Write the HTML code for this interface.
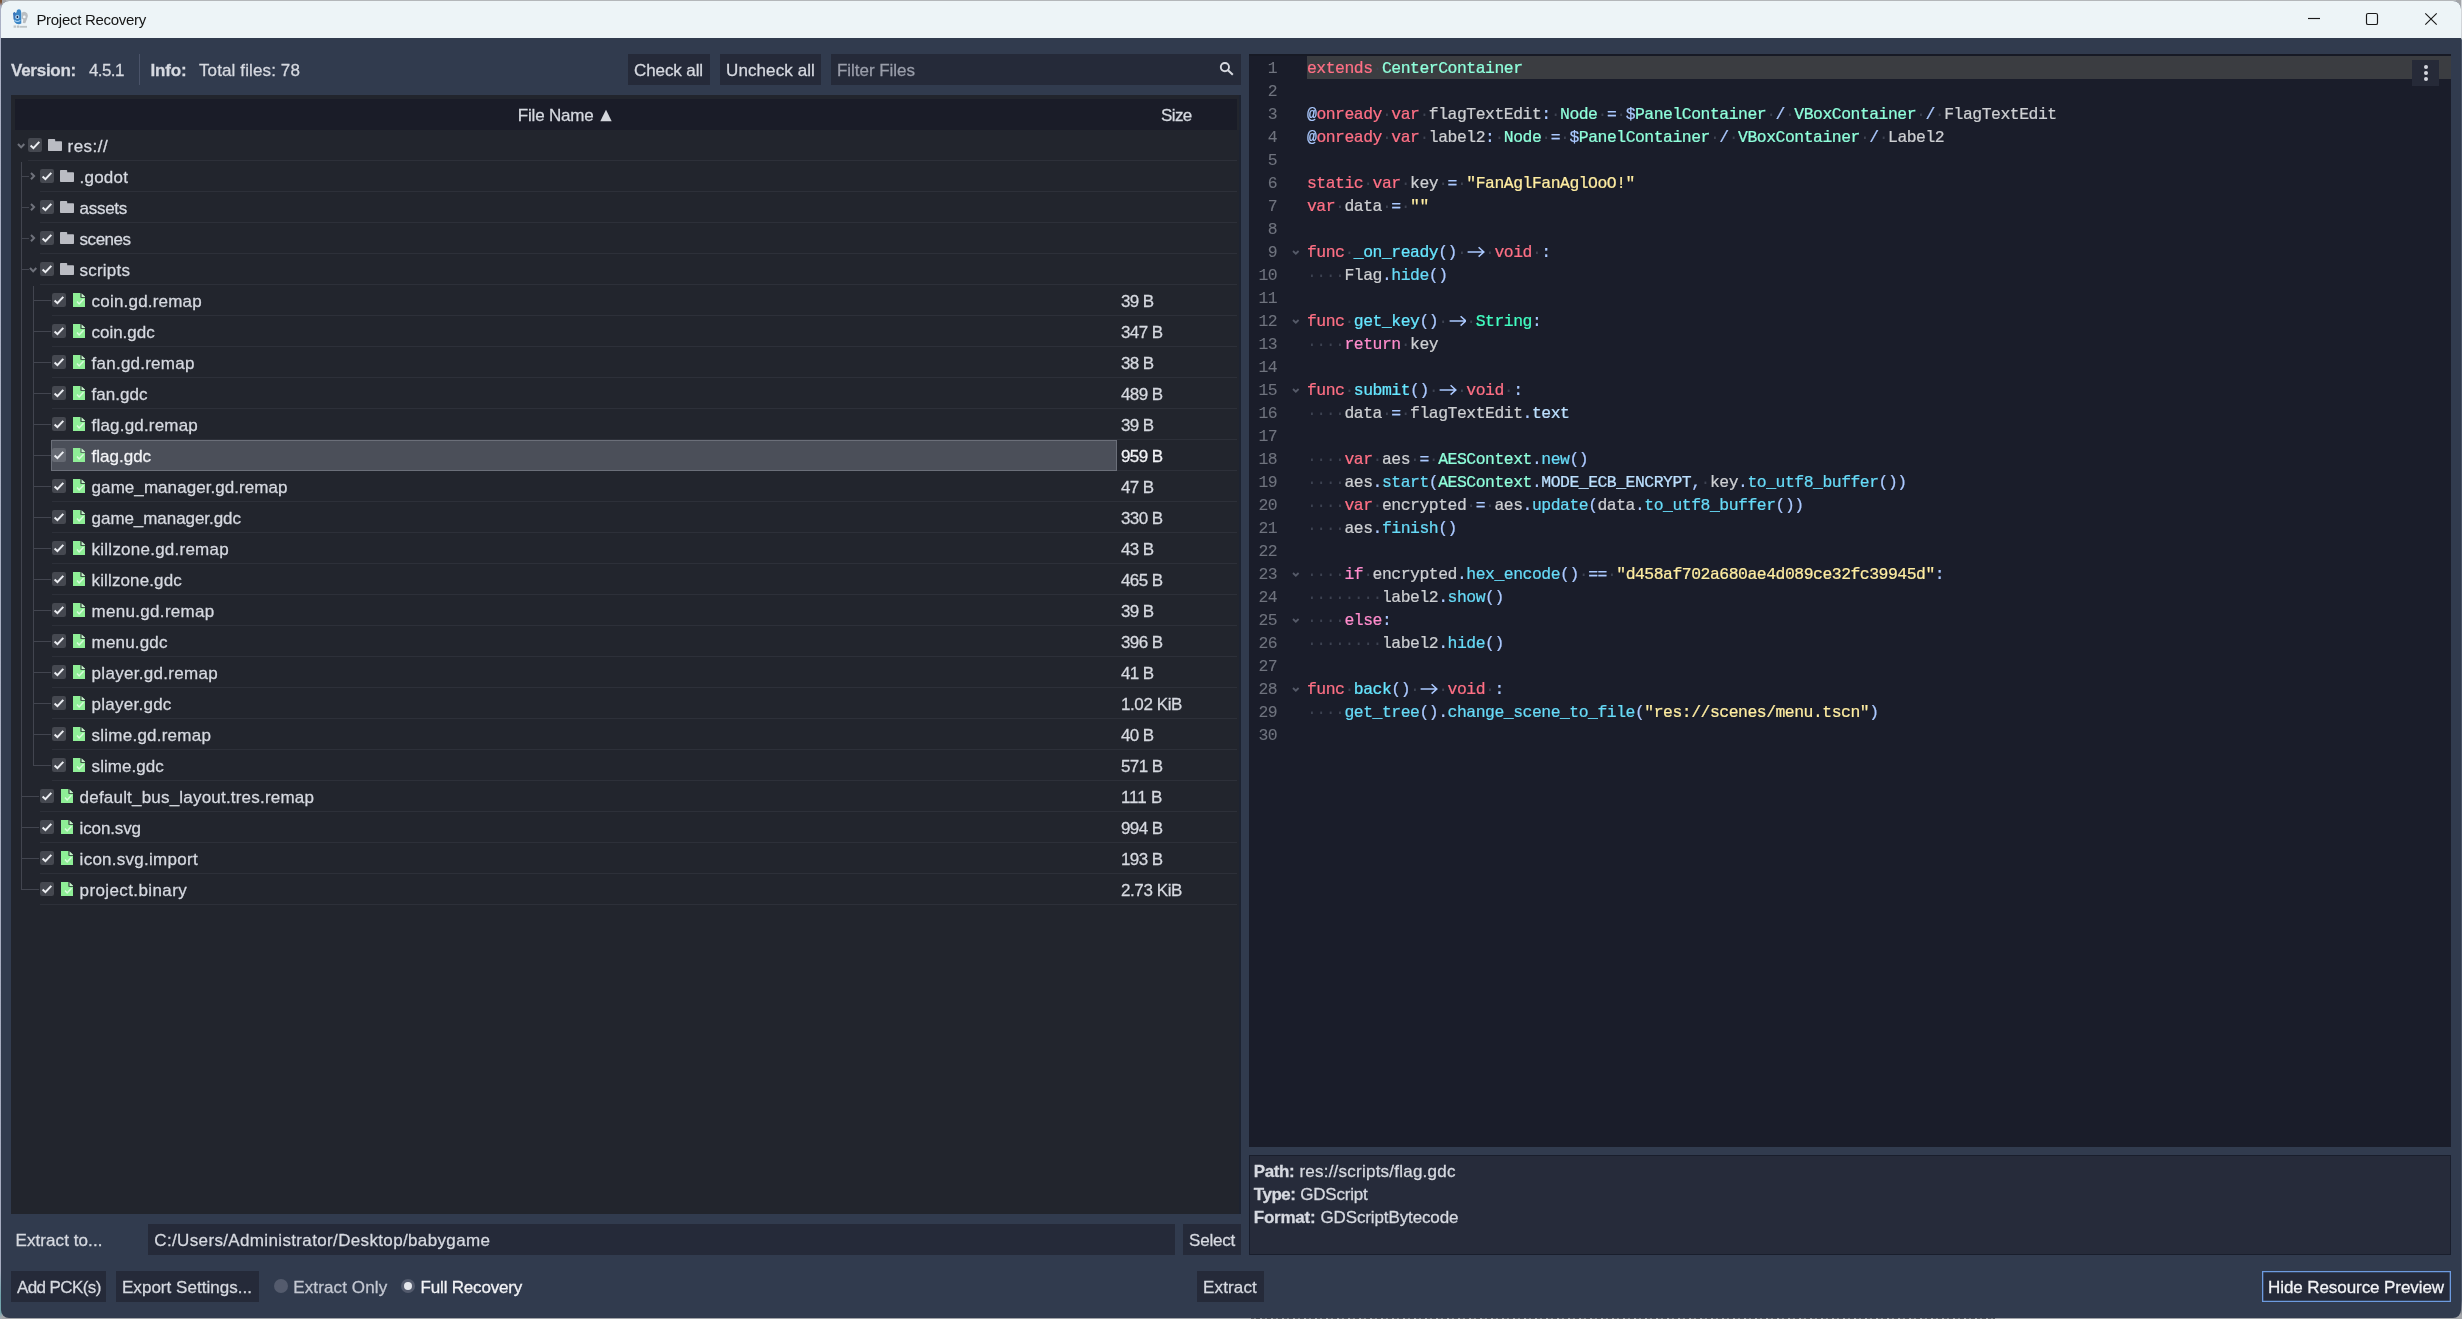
<!DOCTYPE html>
<html><head><meta charset="utf-8"><title>Project Recovery</title><style>
html,body{margin:0;padding:0}
body{width:2462px;height:1319px;position:relative;overflow:hidden;background:#9b9da1;font-family:"Liberation Sans",sans-serif;font-size:17px;}
#root{position:absolute;left:0;top:0;width:2462px;height:1319px;will-change:transform}
.b{position:absolute;display:block}
.t{position:absolute;white-space:pre;line-height:31px;height:31px;letter-spacing:0.0px;color:#d6d9e0;-webkit-text-stroke:0.28px}
.c{position:absolute;white-space:pre;font-family:"Liberation Mono",monospace;font-size:16.4px;letter-spacing:-0.4666px;line-height:23px;height:23px;color:#cdcfd2;-webkit-text-stroke:0.24px}
.ln{text-align:right;color:#6f737e;-webkit-text-stroke:0.1px}
.sp{color:#3d4251;-webkit-text-stroke:0}
.ar{display:inline-block;width:18.75px;height:23px;vertical-align:top;letter-spacing:0}
.ar svg{display:block}
</style></head>
<body>
<div id="root">
<div class="b" style="left:0;top:0;width:2462px;height:1319px;background:#a3a5a9"></div>
<div class="b" style="left:0;top:0;width:2px;height:1319px;background:linear-gradient(180deg,#7a5236 0,#7a5236 2px,#aab0c4 6px,#a6acc0 1270px,#6ea2ab 1296px,#76a6ae 1312px,#a5aab0 1318px)"></div>
<div class="b" style="left:2461px;top:0;width:1px;height:1319px;background:linear-gradient(180deg,#d5d8db 0,#cfd3d8 38px,#4a5468 40px,#4a5468 1300px,#a3a5a9 1316px)"></div>
<div class="b" style="left:1251px;top:1318px;width:744px;height:1px;background:repeating-linear-gradient(90deg,#5d6066 0,#5d6066 3px,#8d9095 3px,#8d9095 5px,#55585e 5px,#55585e 9px,#a3a5a9 9px,#a3a5a9 11px)"></div>
<div class="b" style="left:1px;top:1px;width:2460px;height:1316.5px;border-radius:8px;background:#313b4e;overflow:hidden"><div class="b" style="left:0;top:0;width:2460px;height:37px;background:#edf4f7"></div></div>
<div class="b" style="left:6px;top:0;width:2450px;height:1px;background:#b4b7ba"></div>
<svg class="b" style="left:10px;top:6px" width="22" height="26" viewBox="10 6 22 26">
<path d="M21.6 12.9 Q24.6 10.6 27.3 13.4 Q28.9 16.4 27 19 L25.3 23.3 L22.8 22.9 L23.3 19.6 L21.6 18.8 Z" fill="#b9bec2"/>
<circle cx="24.3" cy="16.9" r="1.35" fill="#f1f6f8"/>
<path d="M13.1 13.4 L14.2 12.1 L15.5 13 L16.6 12.3 L16.9 10.2 Q18.7 8.7 20.5 9.7 L21.2 12 L21.3 23.5 Q19 24.7 16.4 23.7 Q14 22.5 13.7 19.2 L13.5 15.4 Z" fill="#3a85c5"/>
<path d="M13.1 13.4 L14.2 12.1 L15.5 13 L15.2 19 L13.7 19.2 L13.5 15.4 Z" fill="#3c74b8"/>
<circle cx="17.3" cy="17" r="2.1" fill="#b9dcf6"/><ellipse cx="17.4" cy="16.9" rx="0.85" ry="1.2" fill="#1b2a55"/>
<path d="M14.5 20.2 Q17.3 22.8 20.3 20.4" fill="none" stroke="#a9d2f3" stroke-width="1.1"/>
<rect x="13.6" y="25.5" width="2.6" height="2.2" fill="#8b9196" opacity=".5"/><rect x="17" y="25.5" width="2.2" height="2.2" fill="#8b9196" opacity=".55"/><rect x="19.6" y="25.9" width="7.4" height="1.8" fill="#8b9196" opacity=".5"/>
</svg>
<div id="t1" class="t " style="left:36.4px;top:4px;color:#151515;font-size:15px;-webkit-text-stroke:0;letter-spacing:-0.295px;">Project Recovery</div>
<svg class="b" style="left:2300px;top:8px" width="150" height="22" viewBox="0 0 150 22" fill="none" stroke="#1a1a1a" stroke-width="1.15"><path d="M8 10.5 H20"/><rect x="66.5" y="5.5" width="11" height="11" rx="1.6"/><path d="M125.3 5.3 L136.7 16.7 M136.7 5.3 L125.3 16.7"/></svg>
<div id="t2" class="t " style="left:11px;top:55px;color:#d6d9e0;font-weight:bold;letter-spacing:-0.262px;">Version:</div>
<div id="t3" class="t " style="left:89px;top:55px;color:#d6d9e0;letter-spacing:-0.600px;">4.5.1</div>
<div class="b" style="left:139px;top:54px;width:1px;height:31px;background:#4a5369;"></div>
<div id="t4" class="t " style="left:150.5px;top:55px;color:#d6d9e0;font-weight:bold;letter-spacing:-0.166px;">Info:</div>
<div id="t5" class="t " style="left:199px;top:55px;color:#d6d9e0;letter-spacing:0.118px;">Total files: 78</div>
<div class="b" style="left:628px;top:54px;width:82px;height:31px;background:#252a39;"></div>
<div id="t6" class="t " style="left:634px;top:55px;color:#d6d9e0;letter-spacing:-0.102px;">Check all</div>
<div class="b" style="left:720px;top:54px;width:101px;height:31px;background:#252a39;"></div>
<div id="t7" class="t " style="left:726px;top:55px;color:#d6d9e0;letter-spacing:0.102px;">Uncheck all</div>
<div class="b" style="left:831px;top:54px;width:410px;height:31px;background:#252a39;"></div>
<div id="t8" class="t " style="left:837px;top:55px;color:#9a9eaa;letter-spacing:-0.034px;">Filter Files</div>
<svg class="b" style="left:1216px;top:59px" width="20" height="20" viewBox="0 0 20 20"><circle cx="8.9" cy="8.1" r="4.1" fill="none" stroke="#d6d8df" stroke-width="1.9"/><path d="M12 11.2 L16.8 15.8" stroke="#d6d8df" stroke-width="2"/></svg>
<div class="b" style="left:11px;top:95px;width:1230px;height:1119px;background:#22252d;"></div>
<div class="b" style="left:1239px;top:95px;width:2px;height:1119px;background:#1d2331;"></div>
<div class="b" style="left:15px;top:99px;width:1222px;height:30.5px;background:#1a1c28;"></div>
<div id="t9" class="t " style="left:517.8px;top:100px;color:#d6d9e0;letter-spacing:-0.185px;">File Name</div>
<svg class="b" style="left:600px;top:109px" width="12" height="13"><path d="M0.3 12.3 L6 0.8 L11.7 12.3 Z" fill="#d5d7dd"/></svg>
<div id="t10" class="t " style="left:1161px;top:100px;color:#d6d9e0;letter-spacing:-0.600px;">Size</div>
<div class="b" style="left:21px;top:161.5px;width:1px;height:728.5px;background:#42454f;"></div>
<div class="b" style="left:33px;top:285.5px;width:1px;height:480.5px;background:#42454f;"></div>
<div class="b" style="left:28px;top:160px;width:1209px;height:1px;background:#2d3039;"></div>
<svg class="b" style="left:15.80px;top:142.15px" width="10.3" height="7.4" viewBox="-2 -2 10.3 7.4"><path d="M0 0 L3.15 3.4 L6.3 0" fill="none" stroke="#6f727b" stroke-width="2.0"/></svg>
<svg class="b" style="left:28px;top:138.3px" width="14" height="14" viewBox="0 0 14 14"><rect width="14" height="14" rx="2.2" fill="#454850"/><path d="M2.6 7.6 L5.4 10.2 L11.3 3.9" fill="none" stroke="#eceef2" stroke-width="2"/></svg>
<svg class="b" style="left:48px;top:139.3px" width="14" height="12" viewBox="0 0 14 12"><path d="M0 0.8 Q0 0 0.8 0 H6.4 Q7.2 0 7.2 0.8 V2.2 H13.2 Q14 2.2 14 3 V11.2 Q14 12 13.2 12 H0.8 Q0 12 0 11.2 Z" fill="#babcc3"/></svg>
<div id="t11" class="t " style="left:67.6px;top:131px;color:#d6d9e0;letter-spacing:0.451px;">res://</div>
<div class="b" style="left:40px;top:191px;width:1197px;height:1px;background:#2d3039;"></div>
<div class="b" style="left:22px;top:176px;width:7px;height:1px;background:#42454f;"></div>
<svg class="b" style="left:28.95px;top:171.20px" width="7.1" height="10.2" viewBox="-2 -2 7.1 10.2"><path d="M0 0 L3.1 3.1 L0 6.2" fill="none" stroke="#6f727b" stroke-width="2.0"/></svg>
<svg class="b" style="left:40px;top:169.3px" width="14" height="14" viewBox="0 0 14 14"><rect width="14" height="14" rx="2.2" fill="#454850"/><path d="M2.6 7.6 L5.4 10.2 L11.3 3.9" fill="none" stroke="#eceef2" stroke-width="2"/></svg>
<svg class="b" style="left:60px;top:170.3px" width="14" height="12" viewBox="0 0 14 12"><path d="M0 0.8 Q0 0 0.8 0 H6.4 Q7.2 0 7.2 0.8 V2.2 H13.2 Q14 2.2 14 3 V11.2 Q14 12 13.2 12 H0.8 Q0 12 0 11.2 Z" fill="#babcc3"/></svg>
<div id="t12" class="t " style="left:79.6px;top:162px;color:#d6d9e0;letter-spacing:0.206px;">.godot</div>
<div class="b" style="left:40px;top:222px;width:1197px;height:1px;background:#2d3039;"></div>
<div class="b" style="left:22px;top:207px;width:7px;height:1px;background:#42454f;"></div>
<svg class="b" style="left:28.95px;top:202.20px" width="7.1" height="10.2" viewBox="-2 -2 7.1 10.2"><path d="M0 0 L3.1 3.1 L0 6.2" fill="none" stroke="#6f727b" stroke-width="2.0"/></svg>
<svg class="b" style="left:40px;top:200.3px" width="14" height="14" viewBox="0 0 14 14"><rect width="14" height="14" rx="2.2" fill="#454850"/><path d="M2.6 7.6 L5.4 10.2 L11.3 3.9" fill="none" stroke="#eceef2" stroke-width="2"/></svg>
<svg class="b" style="left:60px;top:201.3px" width="14" height="12" viewBox="0 0 14 12"><path d="M0 0.8 Q0 0 0.8 0 H6.4 Q7.2 0 7.2 0.8 V2.2 H13.2 Q14 2.2 14 3 V11.2 Q14 12 13.2 12 H0.8 Q0 12 0 11.2 Z" fill="#babcc3"/></svg>
<div id="t13" class="t " style="left:79.6px;top:193px;color:#d6d9e0;letter-spacing:-0.307px;">assets</div>
<div class="b" style="left:40px;top:253px;width:1197px;height:1px;background:#2d3039;"></div>
<div class="b" style="left:22px;top:238px;width:7px;height:1px;background:#42454f;"></div>
<svg class="b" style="left:28.95px;top:233.20px" width="7.1" height="10.2" viewBox="-2 -2 7.1 10.2"><path d="M0 0 L3.1 3.1 L0 6.2" fill="none" stroke="#6f727b" stroke-width="2.0"/></svg>
<svg class="b" style="left:40px;top:231.3px" width="14" height="14" viewBox="0 0 14 14"><rect width="14" height="14" rx="2.2" fill="#454850"/><path d="M2.6 7.6 L5.4 10.2 L11.3 3.9" fill="none" stroke="#eceef2" stroke-width="2"/></svg>
<svg class="b" style="left:60px;top:232.3px" width="14" height="12" viewBox="0 0 14 12"><path d="M0 0.8 Q0 0 0.8 0 H6.4 Q7.2 0 7.2 0.8 V2.2 H13.2 Q14 2.2 14 3 V11.2 Q14 12 13.2 12 H0.8 Q0 12 0 11.2 Z" fill="#babcc3"/></svg>
<div id="t14" class="t " style="left:79.6px;top:224px;color:#d6d9e0;letter-spacing:-0.479px;">scenes</div>
<div class="b" style="left:40px;top:284px;width:1197px;height:1px;background:#2d3039;"></div>
<div class="b" style="left:22px;top:269px;width:7px;height:1px;background:#42454f;"></div>
<svg class="b" style="left:27.80px;top:266.15px" width="10.3" height="7.4" viewBox="-2 -2 10.3 7.4"><path d="M0 0 L3.15 3.4 L6.3 0" fill="none" stroke="#6f727b" stroke-width="2.0"/></svg>
<svg class="b" style="left:40px;top:262.3px" width="14" height="14" viewBox="0 0 14 14"><rect width="14" height="14" rx="2.2" fill="#454850"/><path d="M2.6 7.6 L5.4 10.2 L11.3 3.9" fill="none" stroke="#eceef2" stroke-width="2"/></svg>
<svg class="b" style="left:60px;top:263.3px" width="14" height="12" viewBox="0 0 14 12"><path d="M0 0.8 Q0 0 0.8 0 H6.4 Q7.2 0 7.2 0.8 V2.2 H13.2 Q14 2.2 14 3 V11.2 Q14 12 13.2 12 H0.8 Q0 12 0 11.2 Z" fill="#babcc3"/></svg>
<div id="t15" class="t " style="left:79.6px;top:255px;color:#d6d9e0;letter-spacing:0.196px;">scripts</div>
<div class="b" style="left:52px;top:315px;width:1185px;height:1px;background:#2d3039;"></div>
<div class="b" style="left:34px;top:300px;width:17px;height:1px;background:#42454f;"></div>
<svg class="b" style="left:52px;top:293.3px" width="14" height="14" viewBox="0 0 14 14"><rect width="14" height="14" rx="2.2" fill="#454850"/><path d="M2.6 7.6 L5.4 10.2 L11.3 3.9" fill="none" stroke="#eceef2" stroke-width="2"/></svg>
<svg class="b" style="left:72.6px;top:292.8px" width="12.7" height="14.4" viewBox="0.3 0.3 12.4 14.4" preserveAspectRatio="none"><path d="M0.3 0.3 H7.6 V5 H12.6 V14.6 H0.3 Z" fill="#8eee96"/><path d="M8.6 0.5 L12.5 4.2 H8.6 Z" fill="#c6f4ca"/><path d="M4.2 8.8 L6.3 11.2 L10.6 6.6" fill="none" stroke="#d8fbdb" stroke-width="1.5"/></svg>
<div id="t16" class="t " style="left:91.6px;top:286px;color:#d6d9e0;letter-spacing:0.197px;">coin.gd.remap</div>
<div id="t17" class="t " style="left:1121px;top:286px;color:#d6d9e0;letter-spacing:-0.600px;">39 B</div>
<div class="b" style="left:52px;top:346px;width:1185px;height:1px;background:#2d3039;"></div>
<div class="b" style="left:34px;top:331px;width:17px;height:1px;background:#42454f;"></div>
<svg class="b" style="left:52px;top:324.3px" width="14" height="14" viewBox="0 0 14 14"><rect width="14" height="14" rx="2.2" fill="#454850"/><path d="M2.6 7.6 L5.4 10.2 L11.3 3.9" fill="none" stroke="#eceef2" stroke-width="2"/></svg>
<svg class="b" style="left:72.6px;top:323.8px" width="12.7" height="14.4" viewBox="0.3 0.3 12.4 14.4" preserveAspectRatio="none"><path d="M0.3 0.3 H7.6 V5 H12.6 V14.6 H0.3 Z" fill="#8eee96"/><path d="M8.6 0.5 L12.5 4.2 H8.6 Z" fill="#c6f4ca"/><path d="M4.2 8.8 L6.3 11.2 L10.6 6.6" fill="none" stroke="#d8fbdb" stroke-width="1.5"/></svg>
<div id="t18" class="t " style="left:91.6px;top:317px;color:#d6d9e0;letter-spacing:-0.041px;">coin.gdc</div>
<div id="t19" class="t " style="left:1121px;top:317px;color:#d6d9e0;letter-spacing:-0.600px;">347 B</div>
<div class="b" style="left:52px;top:377px;width:1185px;height:1px;background:#2d3039;"></div>
<div class="b" style="left:34px;top:362px;width:17px;height:1px;background:#42454f;"></div>
<svg class="b" style="left:52px;top:355.3px" width="14" height="14" viewBox="0 0 14 14"><rect width="14" height="14" rx="2.2" fill="#454850"/><path d="M2.6 7.6 L5.4 10.2 L11.3 3.9" fill="none" stroke="#eceef2" stroke-width="2"/></svg>
<svg class="b" style="left:72.6px;top:354.8px" width="12.7" height="14.4" viewBox="0.3 0.3 12.4 14.4" preserveAspectRatio="none"><path d="M0.3 0.3 H7.6 V5 H12.6 V14.6 H0.3 Z" fill="#8eee96"/><path d="M8.6 0.5 L12.5 4.2 H8.6 Z" fill="#c6f4ca"/><path d="M4.2 8.8 L6.3 11.2 L10.6 6.6" fill="none" stroke="#d8fbdb" stroke-width="1.5"/></svg>
<div id="t20" class="t " style="left:91.6px;top:348px;color:#d6d9e0;letter-spacing:0.234px;">fan.gd.remap</div>
<div id="t21" class="t " style="left:1121px;top:348px;color:#d6d9e0;letter-spacing:-0.600px;">38 B</div>
<div class="b" style="left:52px;top:408px;width:1185px;height:1px;background:#2d3039;"></div>
<div class="b" style="left:34px;top:393px;width:17px;height:1px;background:#42454f;"></div>
<svg class="b" style="left:52px;top:386.3px" width="14" height="14" viewBox="0 0 14 14"><rect width="14" height="14" rx="2.2" fill="#454850"/><path d="M2.6 7.6 L5.4 10.2 L11.3 3.9" fill="none" stroke="#eceef2" stroke-width="2"/></svg>
<svg class="b" style="left:72.6px;top:385.8px" width="12.7" height="14.4" viewBox="0.3 0.3 12.4 14.4" preserveAspectRatio="none"><path d="M0.3 0.3 H7.6 V5 H12.6 V14.6 H0.3 Z" fill="#8eee96"/><path d="M8.6 0.5 L12.5 4.2 H8.6 Z" fill="#c6f4ca"/><path d="M4.2 8.8 L6.3 11.2 L10.6 6.6" fill="none" stroke="#d8fbdb" stroke-width="1.5"/></svg>
<div id="t22" class="t " style="left:91.6px;top:379px;color:#d6d9e0;letter-spacing:0.033px;">fan.gdc</div>
<div id="t23" class="t " style="left:1121px;top:379px;color:#d6d9e0;letter-spacing:-0.600px;">489 B</div>
<div class="b" style="left:52px;top:439px;width:1185px;height:1px;background:#2d3039;"></div>
<div class="b" style="left:34px;top:424px;width:17px;height:1px;background:#42454f;"></div>
<svg class="b" style="left:52px;top:417.3px" width="14" height="14" viewBox="0 0 14 14"><rect width="14" height="14" rx="2.2" fill="#454850"/><path d="M2.6 7.6 L5.4 10.2 L11.3 3.9" fill="none" stroke="#eceef2" stroke-width="2"/></svg>
<svg class="b" style="left:72.6px;top:416.8px" width="12.7" height="14.4" viewBox="0.3 0.3 12.4 14.4" preserveAspectRatio="none"><path d="M0.3 0.3 H7.6 V5 H12.6 V14.6 H0.3 Z" fill="#8eee96"/><path d="M8.6 0.5 L12.5 4.2 H8.6 Z" fill="#c6f4ca"/><path d="M4.2 8.8 L6.3 11.2 L10.6 6.6" fill="none" stroke="#d8fbdb" stroke-width="1.5"/></svg>
<div id="t24" class="t " style="left:91.6px;top:410px;color:#d6d9e0;letter-spacing:0.181px;">flag.gd.remap</div>
<div id="t25" class="t " style="left:1121px;top:410px;color:#d6d9e0;letter-spacing:-0.600px;">39 B</div>
<div class="b" style="left:52px;top:470px;width:1185px;height:1px;background:#2d3039;"></div>
<div class="b" style="left:51px;top:440px;width:1066px;height:31px;background:#4b4f59;box-shadow:0 0 0 1px #6b6f79 inset"></div>
<div class="b" style="left:34px;top:455px;width:17px;height:1px;background:#42454f;"></div>
<svg class="b" style="left:52px;top:448.3px" width="14" height="14" viewBox="0 0 14 14"><rect width="14" height="14" rx="2.2" fill="#666a73"/><path d="M2.6 7.6 L5.4 10.2 L11.3 3.9" fill="none" stroke="#eceef2" stroke-width="2"/></svg>
<svg class="b" style="left:72.6px;top:447.8px" width="12.7" height="14.4" viewBox="0.3 0.3 12.4 14.4" preserveAspectRatio="none"><path d="M0.3 0.3 H7.6 V5 H12.6 V14.6 H0.3 Z" fill="#8eee96"/><path d="M8.6 0.5 L12.5 4.2 H8.6 Z" fill="#c6f4ca"/><path d="M4.2 8.8 L6.3 11.2 L10.6 6.6" fill="none" stroke="#d8fbdb" stroke-width="1.5"/></svg>
<div id="t26" class="t " style="left:91.6px;top:441px;color:#f2f3f6;letter-spacing:-0.006px;">flag.gdc</div>
<div id="t27" class="t " style="left:1121px;top:441px;color:#f2f3f6;letter-spacing:-0.600px;">959 B</div>
<div class="b" style="left:52px;top:501px;width:1185px;height:1px;background:#2d3039;"></div>
<div class="b" style="left:34px;top:486px;width:17px;height:1px;background:#42454f;"></div>
<svg class="b" style="left:52px;top:479.3px" width="14" height="14" viewBox="0 0 14 14"><rect width="14" height="14" rx="2.2" fill="#454850"/><path d="M2.6 7.6 L5.4 10.2 L11.3 3.9" fill="none" stroke="#eceef2" stroke-width="2"/></svg>
<svg class="b" style="left:72.6px;top:478.8px" width="12.7" height="14.4" viewBox="0.3 0.3 12.4 14.4" preserveAspectRatio="none"><path d="M0.3 0.3 H7.6 V5 H12.6 V14.6 H0.3 Z" fill="#8eee96"/><path d="M8.6 0.5 L12.5 4.2 H8.6 Z" fill="#c6f4ca"/><path d="M4.2 8.8 L6.3 11.2 L10.6 6.6" fill="none" stroke="#d8fbdb" stroke-width="1.5"/></svg>
<div id="t28" class="t " style="left:91.6px;top:472px;color:#d6d9e0;letter-spacing:0.062px;">game_manager.gd.remap</div>
<div id="t29" class="t " style="left:1121px;top:472px;color:#d6d9e0;letter-spacing:-0.600px;">47 B</div>
<div class="b" style="left:52px;top:532px;width:1185px;height:1px;background:#2d3039;"></div>
<div class="b" style="left:34px;top:517px;width:17px;height:1px;background:#42454f;"></div>
<svg class="b" style="left:52px;top:510.3px" width="14" height="14" viewBox="0 0 14 14"><rect width="14" height="14" rx="2.2" fill="#454850"/><path d="M2.6 7.6 L5.4 10.2 L11.3 3.9" fill="none" stroke="#eceef2" stroke-width="2"/></svg>
<svg class="b" style="left:72.6px;top:509.8px" width="12.7" height="14.4" viewBox="0.3 0.3 12.4 14.4" preserveAspectRatio="none"><path d="M0.3 0.3 H7.6 V5 H12.6 V14.6 H0.3 Z" fill="#8eee96"/><path d="M8.6 0.5 L12.5 4.2 H8.6 Z" fill="#c6f4ca"/><path d="M4.2 8.8 L6.3 11.2 L10.6 6.6" fill="none" stroke="#d8fbdb" stroke-width="1.5"/></svg>
<div id="t30" class="t " style="left:91.6px;top:503px;color:#d6d9e0;letter-spacing:-0.061px;">game_manager.gdc</div>
<div id="t31" class="t " style="left:1121px;top:503px;color:#d6d9e0;letter-spacing:-0.600px;">330 B</div>
<div class="b" style="left:52px;top:563px;width:1185px;height:1px;background:#2d3039;"></div>
<div class="b" style="left:34px;top:548px;width:17px;height:1px;background:#42454f;"></div>
<svg class="b" style="left:52px;top:541.3px" width="14" height="14" viewBox="0 0 14 14"><rect width="14" height="14" rx="2.2" fill="#454850"/><path d="M2.6 7.6 L5.4 10.2 L11.3 3.9" fill="none" stroke="#eceef2" stroke-width="2"/></svg>
<svg class="b" style="left:72.6px;top:540.8px" width="12.7" height="14.4" viewBox="0.3 0.3 12.4 14.4" preserveAspectRatio="none"><path d="M0.3 0.3 H7.6 V5 H12.6 V14.6 H0.3 Z" fill="#8eee96"/><path d="M8.6 0.5 L12.5 4.2 H8.6 Z" fill="#c6f4ca"/><path d="M4.2 8.8 L6.3 11.2 L10.6 6.6" fill="none" stroke="#d8fbdb" stroke-width="1.5"/></svg>
<div id="t32" class="t " style="left:91.6px;top:534px;color:#d6d9e0;letter-spacing:0.238px;">killzone.gd.remap</div>
<div id="t33" class="t " style="left:1121px;top:534px;color:#d6d9e0;letter-spacing:-0.600px;">43 B</div>
<div class="b" style="left:52px;top:594px;width:1185px;height:1px;background:#2d3039;"></div>
<div class="b" style="left:34px;top:579px;width:17px;height:1px;background:#42454f;"></div>
<svg class="b" style="left:52px;top:572.3px" width="14" height="14" viewBox="0 0 14 14"><rect width="14" height="14" rx="2.2" fill="#454850"/><path d="M2.6 7.6 L5.4 10.2 L11.3 3.9" fill="none" stroke="#eceef2" stroke-width="2"/></svg>
<svg class="b" style="left:72.6px;top:571.8px" width="12.7" height="14.4" viewBox="0.3 0.3 12.4 14.4" preserveAspectRatio="none"><path d="M0.3 0.3 H7.6 V5 H12.6 V14.6 H0.3 Z" fill="#8eee96"/><path d="M8.6 0.5 L12.5 4.2 H8.6 Z" fill="#c6f4ca"/><path d="M4.2 8.8 L6.3 11.2 L10.6 6.6" fill="none" stroke="#d8fbdb" stroke-width="1.5"/></svg>
<div id="t34" class="t " style="left:91.6px;top:565px;color:#d6d9e0;letter-spacing:0.123px;">killzone.gdc</div>
<div id="t35" class="t " style="left:1121px;top:565px;color:#d6d9e0;letter-spacing:-0.600px;">465 B</div>
<div class="b" style="left:52px;top:625px;width:1185px;height:1px;background:#2d3039;"></div>
<div class="b" style="left:34px;top:610px;width:17px;height:1px;background:#42454f;"></div>
<svg class="b" style="left:52px;top:603.3px" width="14" height="14" viewBox="0 0 14 14"><rect width="14" height="14" rx="2.2" fill="#454850"/><path d="M2.6 7.6 L5.4 10.2 L11.3 3.9" fill="none" stroke="#eceef2" stroke-width="2"/></svg>
<svg class="b" style="left:72.6px;top:602.8px" width="12.7" height="14.4" viewBox="0.3 0.3 12.4 14.4" preserveAspectRatio="none"><path d="M0.3 0.3 H7.6 V5 H12.6 V14.6 H0.3 Z" fill="#8eee96"/><path d="M8.6 0.5 L12.5 4.2 H8.6 Z" fill="#c6f4ca"/><path d="M4.2 8.8 L6.3 11.2 L10.6 6.6" fill="none" stroke="#d8fbdb" stroke-width="1.5"/></svg>
<div id="t36" class="t " style="left:91.6px;top:596px;color:#d6d9e0;letter-spacing:0.302px;">menu.gd.remap</div>
<div id="t37" class="t " style="left:1121px;top:596px;color:#d6d9e0;letter-spacing:-0.600px;">39 B</div>
<div class="b" style="left:52px;top:656px;width:1185px;height:1px;background:#2d3039;"></div>
<div class="b" style="left:34px;top:641px;width:17px;height:1px;background:#42454f;"></div>
<svg class="b" style="left:52px;top:634.3px" width="14" height="14" viewBox="0 0 14 14"><rect width="14" height="14" rx="2.2" fill="#454850"/><path d="M2.6 7.6 L5.4 10.2 L11.3 3.9" fill="none" stroke="#eceef2" stroke-width="2"/></svg>
<svg class="b" style="left:72.6px;top:633.8px" width="12.7" height="14.4" viewBox="0.3 0.3 12.4 14.4" preserveAspectRatio="none"><path d="M0.3 0.3 H7.6 V5 H12.6 V14.6 H0.3 Z" fill="#8eee96"/><path d="M8.6 0.5 L12.5 4.2 H8.6 Z" fill="#c6f4ca"/><path d="M4.2 8.8 L6.3 11.2 L10.6 6.6" fill="none" stroke="#d8fbdb" stroke-width="1.5"/></svg>
<div id="t38" class="t " style="left:91.6px;top:627px;color:#d6d9e0;letter-spacing:0.166px;">menu.gdc</div>
<div id="t39" class="t " style="left:1121px;top:627px;color:#d6d9e0;letter-spacing:-0.600px;">396 B</div>
<div class="b" style="left:52px;top:687px;width:1185px;height:1px;background:#2d3039;"></div>
<div class="b" style="left:34px;top:672px;width:17px;height:1px;background:#42454f;"></div>
<svg class="b" style="left:52px;top:665.3px" width="14" height="14" viewBox="0 0 14 14"><rect width="14" height="14" rx="2.2" fill="#454850"/><path d="M2.6 7.6 L5.4 10.2 L11.3 3.9" fill="none" stroke="#eceef2" stroke-width="2"/></svg>
<svg class="b" style="left:72.6px;top:664.8px" width="12.7" height="14.4" viewBox="0.3 0.3 12.4 14.4" preserveAspectRatio="none"><path d="M0.3 0.3 H7.6 V5 H12.6 V14.6 H0.3 Z" fill="#8eee96"/><path d="M8.6 0.5 L12.5 4.2 H8.6 Z" fill="#c6f4ca"/><path d="M4.2 8.8 L6.3 11.2 L10.6 6.6" fill="none" stroke="#d8fbdb" stroke-width="1.5"/></svg>
<div id="t40" class="t " style="left:91.6px;top:658px;color:#d6d9e0;letter-spacing:0.306px;">player.gd.remap</div>
<div id="t41" class="t " style="left:1121px;top:658px;color:#d6d9e0;letter-spacing:-0.600px;">41 B</div>
<div class="b" style="left:52px;top:718px;width:1185px;height:1px;background:#2d3039;"></div>
<div class="b" style="left:34px;top:703px;width:17px;height:1px;background:#42454f;"></div>
<svg class="b" style="left:52px;top:696.3px" width="14" height="14" viewBox="0 0 14 14"><rect width="14" height="14" rx="2.2" fill="#454850"/><path d="M2.6 7.6 L5.4 10.2 L11.3 3.9" fill="none" stroke="#eceef2" stroke-width="2"/></svg>
<svg class="b" style="left:72.6px;top:695.8px" width="12.7" height="14.4" viewBox="0.3 0.3 12.4 14.4" preserveAspectRatio="none"><path d="M0.3 0.3 H7.6 V5 H12.6 V14.6 H0.3 Z" fill="#8eee96"/><path d="M8.6 0.5 L12.5 4.2 H8.6 Z" fill="#c6f4ca"/><path d="M4.2 8.8 L6.3 11.2 L10.6 6.6" fill="none" stroke="#d8fbdb" stroke-width="1.5"/></svg>
<div id="t42" class="t " style="left:91.6px;top:689px;color:#d6d9e0;letter-spacing:0.250px;">player.gdc</div>
<div id="t43" class="t " style="left:1121px;top:689px;color:#d6d9e0;letter-spacing:-0.408px;">1.02 KiB</div>
<div class="b" style="left:52px;top:749px;width:1185px;height:1px;background:#2d3039;"></div>
<div class="b" style="left:34px;top:734px;width:17px;height:1px;background:#42454f;"></div>
<svg class="b" style="left:52px;top:727.3px" width="14" height="14" viewBox="0 0 14 14"><rect width="14" height="14" rx="2.2" fill="#454850"/><path d="M2.6 7.6 L5.4 10.2 L11.3 3.9" fill="none" stroke="#eceef2" stroke-width="2"/></svg>
<svg class="b" style="left:72.6px;top:726.8px" width="12.7" height="14.4" viewBox="0.3 0.3 12.4 14.4" preserveAspectRatio="none"><path d="M0.3 0.3 H7.6 V5 H12.6 V14.6 H0.3 Z" fill="#8eee96"/><path d="M8.6 0.5 L12.5 4.2 H8.6 Z" fill="#c6f4ca"/><path d="M4.2 8.8 L6.3 11.2 L10.6 6.6" fill="none" stroke="#d8fbdb" stroke-width="1.5"/></svg>
<div id="t44" class="t " style="left:91.6px;top:720px;color:#d6d9e0;letter-spacing:0.234px;">slime.gd.remap</div>
<div id="t45" class="t " style="left:1121px;top:720px;color:#d6d9e0;letter-spacing:-0.600px;">40 B</div>
<div class="b" style="left:52px;top:780px;width:1185px;height:1px;background:#2d3039;"></div>
<div class="b" style="left:34px;top:765px;width:17px;height:1px;background:#42454f;"></div>
<svg class="b" style="left:52px;top:758.3px" width="14" height="14" viewBox="0 0 14 14"><rect width="14" height="14" rx="2.2" fill="#454850"/><path d="M2.6 7.6 L5.4 10.2 L11.3 3.9" fill="none" stroke="#eceef2" stroke-width="2"/></svg>
<svg class="b" style="left:72.6px;top:757.8px" width="12.7" height="14.4" viewBox="0.3 0.3 12.4 14.4" preserveAspectRatio="none"><path d="M0.3 0.3 H7.6 V5 H12.6 V14.6 H0.3 Z" fill="#8eee96"/><path d="M8.6 0.5 L12.5 4.2 H8.6 Z" fill="#c6f4ca"/><path d="M4.2 8.8 L6.3 11.2 L10.6 6.6" fill="none" stroke="#d8fbdb" stroke-width="1.5"/></svg>
<div id="t46" class="t " style="left:91.6px;top:751px;color:#d6d9e0;letter-spacing:0.054px;">slime.gdc</div>
<div id="t47" class="t " style="left:1121px;top:751px;color:#d6d9e0;letter-spacing:-0.600px;">571 B</div>
<div class="b" style="left:40px;top:811px;width:1197px;height:1px;background:#2d3039;"></div>
<div class="b" style="left:22px;top:796px;width:17px;height:1px;background:#42454f;"></div>
<svg class="b" style="left:40px;top:789.3px" width="14" height="14" viewBox="0 0 14 14"><rect width="14" height="14" rx="2.2" fill="#454850"/><path d="M2.6 7.6 L5.4 10.2 L11.3 3.9" fill="none" stroke="#eceef2" stroke-width="2"/></svg>
<svg class="b" style="left:60.6px;top:788.8px" width="12.7" height="14.4" viewBox="0.3 0.3 12.4 14.4" preserveAspectRatio="none"><path d="M0.3 0.3 H7.6 V5 H12.6 V14.6 H0.3 Z" fill="#8eee96"/><path d="M8.6 0.5 L12.5 4.2 H8.6 Z" fill="#c6f4ca"/><path d="M4.2 8.8 L6.3 11.2 L10.6 6.6" fill="none" stroke="#d8fbdb" stroke-width="1.5"/></svg>
<div id="t48" class="t " style="left:79.6px;top:782px;color:#d6d9e0;letter-spacing:0.200px;">default_bus_layout.tres.remap</div>
<div id="t49" class="t " style="left:1121px;top:782px;color:#d6d9e0;letter-spacing:-0.121px;">111 B</div>
<div class="b" style="left:40px;top:842px;width:1197px;height:1px;background:#2d3039;"></div>
<div class="b" style="left:22px;top:827px;width:17px;height:1px;background:#42454f;"></div>
<svg class="b" style="left:40px;top:820.3px" width="14" height="14" viewBox="0 0 14 14"><rect width="14" height="14" rx="2.2" fill="#454850"/><path d="M2.6 7.6 L5.4 10.2 L11.3 3.9" fill="none" stroke="#eceef2" stroke-width="2"/></svg>
<svg class="b" style="left:60.6px;top:819.8px" width="12.7" height="14.4" viewBox="0.3 0.3 12.4 14.4" preserveAspectRatio="none"><path d="M0.3 0.3 H7.6 V5 H12.6 V14.6 H0.3 Z" fill="#8eee96"/><path d="M8.6 0.5 L12.5 4.2 H8.6 Z" fill="#c6f4ca"/><path d="M4.2 8.8 L6.3 11.2 L10.6 6.6" fill="none" stroke="#d8fbdb" stroke-width="1.5"/></svg>
<div id="t50" class="t " style="left:79.6px;top:813px;color:#d6d9e0;letter-spacing:-0.134px;">icon.svg</div>
<div id="t51" class="t " style="left:1121px;top:813px;color:#d6d9e0;letter-spacing:-0.600px;">994 B</div>
<div class="b" style="left:40px;top:873px;width:1197px;height:1px;background:#2d3039;"></div>
<div class="b" style="left:22px;top:858px;width:17px;height:1px;background:#42454f;"></div>
<svg class="b" style="left:40px;top:851.3px" width="14" height="14" viewBox="0 0 14 14"><rect width="14" height="14" rx="2.2" fill="#454850"/><path d="M2.6 7.6 L5.4 10.2 L11.3 3.9" fill="none" stroke="#eceef2" stroke-width="2"/></svg>
<svg class="b" style="left:60.6px;top:850.8px" width="12.7" height="14.4" viewBox="0.3 0.3 12.4 14.4" preserveAspectRatio="none"><path d="M0.3 0.3 H7.6 V5 H12.6 V14.6 H0.3 Z" fill="#8eee96"/><path d="M8.6 0.5 L12.5 4.2 H8.6 Z" fill="#c6f4ca"/><path d="M4.2 8.8 L6.3 11.2 L10.6 6.6" fill="none" stroke="#d8fbdb" stroke-width="1.5"/></svg>
<div id="t52" class="t " style="left:79.6px;top:844px;color:#d6d9e0;letter-spacing:0.265px;">icon.svg.import</div>
<div id="t53" class="t " style="left:1121px;top:844px;color:#d6d9e0;letter-spacing:-0.600px;">193 B</div>
<div class="b" style="left:40px;top:904px;width:1197px;height:1px;background:#2d3039;"></div>
<div class="b" style="left:22px;top:889px;width:17px;height:1px;background:#42454f;"></div>
<svg class="b" style="left:40px;top:882.3px" width="14" height="14" viewBox="0 0 14 14"><rect width="14" height="14" rx="2.2" fill="#454850"/><path d="M2.6 7.6 L5.4 10.2 L11.3 3.9" fill="none" stroke="#eceef2" stroke-width="2"/></svg>
<svg class="b" style="left:60.6px;top:881.8px" width="12.7" height="14.4" viewBox="0.3 0.3 12.4 14.4" preserveAspectRatio="none"><path d="M0.3 0.3 H7.6 V5 H12.6 V14.6 H0.3 Z" fill="#8eee96"/><path d="M8.6 0.5 L12.5 4.2 H8.6 Z" fill="#c6f4ca"/><path d="M4.2 8.8 L6.3 11.2 L10.6 6.6" fill="none" stroke="#d8fbdb" stroke-width="1.5"/></svg>
<div id="t54" class="t " style="left:79.6px;top:875px;color:#d6d9e0;letter-spacing:0.388px;">project.binary</div>
<div id="t55" class="t " style="left:1121px;top:875px;color:#d6d9e0;letter-spacing:-0.408px;">2.73 KiB</div>
<div id="t56" class="t " style="left:15.5px;top:1225px;color:#d6d9e0;letter-spacing:0.078px;">Extract to...</div>
<div class="b" style="left:148px;top:1224px;width:1027px;height:31px;background:#252a39;"></div>
<div id="t57" class="t " style="left:154.3px;top:1225px;color:#d6d9e0;letter-spacing:0.354px;">C:/Users/Administrator/Desktop/babygame</div>
<div class="b" style="left:1183px;top:1224px;width:58px;height:31px;background:#252a39;"></div>
<div id="t58" class="t " style="left:1189px;top:1225px;color:#d6d9e0;letter-spacing:-0.208px;">Select</div>
<div class="b" style="left:11px;top:1271px;width:95px;height:31px;background:#252a39;"></div>
<div id="t59" class="t " style="left:17px;top:1272px;color:#d6d9e0;letter-spacing:-0.600px;">Add PCK(s)</div>
<div class="b" style="left:116px;top:1271px;width:143px;height:31px;background:#252a39;"></div>
<div id="t60" class="t " style="left:122px;top:1272px;color:#d6d9e0;letter-spacing:0.030px;">Export Settings...</div>
<div class="b" style="left:274px;top:1279px;width:14px;height:14px;border-radius:7px;background:#545b6d"></div>
<div id="t61" class="t " style="left:293.3px;top:1272px;color:#c3c7d1;letter-spacing:0.117px;">Extract Only</div>
<div class="b" style="left:401px;top:1279px;width:14px;height:14px;border-radius:7px;background:#545b6d"></div>
<div class="b" style="left:403.8px;top:1281.8px;width:8.4px;height:8.4px;border-radius:5px;background:#e4e6eb"></div>
<div id="t62" class="t " style="left:420.6px;top:1272px;color:#f2f3f6;letter-spacing:-0.194px;">Full Recovery</div>
<div class="b" style="left:1197px;top:1271px;width:67px;height:31px;background:#252a39;"></div>
<div id="t63" class="t " style="left:1203px;top:1272px;color:#d6d9e0;letter-spacing:0.156px;">Extract</div>
<div class="b" style="left:1249px;top:54px;width:1202px;height:1092.5px;background:#1a1d2a;"></div>
<div class="b" style="left:1249px;top:54px;width:1202px;height:2px;background:#171a25;"></div>
<div class="b" style="left:1307px;top:56px;width:1144px;height:23px;background:#3b3d41;"></div>
<div class="b" style="left:2412px;top:60px;width:27px;height:26px;background:#262a38;"></div>
<div class="b" style="left:2423.5px;top:65px;width:4px;height:4px;border-radius:2px;background:#d4d6de"></div>
<div class="b" style="left:2423.5px;top:71px;width:4px;height:4px;border-radius:2px;background:#d4d6de"></div>
<div class="b" style="left:2423.5px;top:77px;width:4px;height:4px;border-radius:2px;background:#d4d6de"></div>
<div class="c ln" style="left:1249px;top:56.92px;width:28.2px">1</div>
<div class="c" style="left:1307px;top:56.92px"><span style="color:#ff7085">extends</span><span class="sp">·</span><span style="color:#8fffdb">CenterContainer</span></div>
<div class="c ln" style="left:1249px;top:79.92px;width:28.2px">2</div>
<div class="c ln" style="left:1249px;top:102.92px;width:28.2px">3</div>
<div class="c" style="left:1307px;top:102.92px"><span style="color:#abc9ff">@</span><span style="color:#ff7085">onready</span><span class="sp">·</span><span style="color:#ff7085">var</span><span class="sp">·</span><span style="color:#cdcfd2">flagTextEdit</span><span style="color:#abc9ff">:</span><span class="sp">·</span><span style="color:#8fffdb">Node</span><span class="sp">·</span><span style="color:#abc9ff">=</span><span class="sp">·</span><span style="color:#abc9ff">$</span><span style="color:#8fffdb">PanelContainer</span><span class="sp">·</span><span style="color:#abc9ff">/</span><span class="sp">·</span><span style="color:#8fffdb">VBoxContainer</span><span class="sp">·</span><span style="color:#abc9ff">/</span><span class="sp">·</span><span style="color:#cdcfd2">FlagTextEdit</span></div>
<div class="c ln" style="left:1249px;top:125.92px;width:28.2px">4</div>
<div class="c" style="left:1307px;top:125.92px"><span style="color:#abc9ff">@</span><span style="color:#ff7085">onready</span><span class="sp">·</span><span style="color:#ff7085">var</span><span class="sp">·</span><span style="color:#cdcfd2">label2</span><span style="color:#abc9ff">:</span><span class="sp">·</span><span style="color:#8fffdb">Node</span><span class="sp">·</span><span style="color:#abc9ff">=</span><span class="sp">·</span><span style="color:#abc9ff">$</span><span style="color:#8fffdb">PanelContainer</span><span class="sp">·</span><span style="color:#abc9ff">/</span><span class="sp">·</span><span style="color:#8fffdb">VBoxContainer</span><span class="sp">·</span><span style="color:#abc9ff">/</span><span class="sp">·</span><span style="color:#cdcfd2">Label2</span></div>
<div class="c ln" style="left:1249px;top:148.92px;width:28.2px">5</div>
<div class="c ln" style="left:1249px;top:171.92px;width:28.2px">6</div>
<div class="c" style="left:1307px;top:171.92px"><span style="color:#ff7085">static</span><span class="sp">·</span><span style="color:#ff7085">var</span><span class="sp">·</span><span style="color:#cdcfd2">key</span><span class="sp">·</span><span style="color:#abc9ff">=</span><span class="sp">·</span><span style="color:#ffeda1">&quot;FanAglFanAglOoO!&quot;</span></div>
<div class="c ln" style="left:1249px;top:194.92px;width:28.2px">7</div>
<div class="c" style="left:1307px;top:194.92px"><span style="color:#ff7085">var</span><span class="sp">·</span><span style="color:#cdcfd2">data</span><span class="sp">·</span><span style="color:#abc9ff">=</span><span class="sp">·</span><span style="color:#ffeda1">&quot;&quot;</span></div>
<div class="c ln" style="left:1249px;top:217.92px;width:28.2px">8</div>
<div class="c ln" style="left:1249px;top:240.92px;width:28.2px">9</div>
<svg class="b" style="left:1291.00px;top:249.05px" width="9.6" height="6.7" viewBox="-2 -2 9.6 6.7"><path d="M0 0 L2.8 2.7 L5.6 0" fill="none" stroke="#555a68" stroke-width="1.8"/></svg>
<div class="c" style="left:1307px;top:240.92px"><span style="color:#ff7085">func</span><span class="sp">·</span><span style="color:#66e6ff">_on_ready</span><span style="color:#abc9ff">()</span><span class="sp">·</span><span class="ar"><svg width="18.75" height="23" viewBox="0 0 18.75 23"><path d="M1.6 10.98 H17.6 M12.6 6.28 L17.8 10.98 L12.6 15.68" fill="none" stroke="#abc9ff" stroke-width="1.55"/></svg></span><span class="sp">·</span><span style="color:#ff7085">void</span><span class="sp">·</span><span style="color:#abc9ff">:</span></div>
<div class="c ln" style="left:1249px;top:263.92px;width:28.2px">10</div>
<div class="c" style="left:1307px;top:263.92px"><span class="sp">····</span><span style="color:#cdcfd2">Flag</span><span style="color:#abc9ff">.</span><span style="color:#67dbf8">hide</span><span style="color:#abc9ff">()</span></div>
<div class="c ln" style="left:1249px;top:286.92px;width:28.2px">11</div>
<div class="c ln" style="left:1249px;top:309.92px;width:28.2px">12</div>
<svg class="b" style="left:1291.00px;top:318.05px" width="9.6" height="6.7" viewBox="-2 -2 9.6 6.7"><path d="M0 0 L2.8 2.7 L5.6 0" fill="none" stroke="#555a68" stroke-width="1.8"/></svg>
<div class="c" style="left:1307px;top:309.92px"><span style="color:#ff7085">func</span><span class="sp">·</span><span style="color:#66e6ff">get_key</span><span style="color:#abc9ff">()</span><span class="sp">·</span><span class="ar"><svg width="18.75" height="23" viewBox="0 0 18.75 23"><path d="M1.6 10.98 H17.6 M12.6 6.28 L17.8 10.98 L12.6 15.68" fill="none" stroke="#abc9ff" stroke-width="1.55"/></svg></span><span class="sp">·</span><span style="color:#42ffc2">String</span><span style="color:#abc9ff">:</span></div>
<div class="c ln" style="left:1249px;top:332.92px;width:28.2px">13</div>
<div class="c" style="left:1307px;top:332.92px"><span class="sp">····</span><span style="color:#ff8ccc">return</span><span class="sp">·</span><span style="color:#cdcfd2">key</span></div>
<div class="c ln" style="left:1249px;top:355.92px;width:28.2px">14</div>
<div class="c ln" style="left:1249px;top:378.92px;width:28.2px">15</div>
<svg class="b" style="left:1291.00px;top:387.05px" width="9.6" height="6.7" viewBox="-2 -2 9.6 6.7"><path d="M0 0 L2.8 2.7 L5.6 0" fill="none" stroke="#555a68" stroke-width="1.8"/></svg>
<div class="c" style="left:1307px;top:378.92px"><span style="color:#ff7085">func</span><span class="sp">·</span><span style="color:#66e6ff">submit</span><span style="color:#abc9ff">()</span><span class="sp">·</span><span class="ar"><svg width="18.75" height="23" viewBox="0 0 18.75 23"><path d="M1.6 10.98 H17.6 M12.6 6.28 L17.8 10.98 L12.6 15.68" fill="none" stroke="#abc9ff" stroke-width="1.55"/></svg></span><span class="sp">·</span><span style="color:#ff7085">void</span><span class="sp">·</span><span style="color:#abc9ff">:</span></div>
<div class="c ln" style="left:1249px;top:401.92px;width:28.2px">16</div>
<div class="c" style="left:1307px;top:401.92px"><span class="sp">····</span><span style="color:#cdcfd2">data</span><span class="sp">·</span><span style="color:#abc9ff">=</span><span class="sp">·</span><span style="color:#cdcfd2">flagTextEdit</span><span style="color:#abc9ff">.</span><span style="color:#bce0ff">text</span></div>
<div class="c ln" style="left:1249px;top:424.92px;width:28.2px">17</div>
<div class="c ln" style="left:1249px;top:447.92px;width:28.2px">18</div>
<div class="c" style="left:1307px;top:447.92px"><span class="sp">····</span><span style="color:#ff7085">var</span><span class="sp">·</span><span style="color:#cdcfd2">aes</span><span class="sp">·</span><span style="color:#abc9ff">=</span><span class="sp">·</span><span style="color:#8fffdb">AESContext</span><span style="color:#abc9ff">.</span><span style="color:#67dbf8">new</span><span style="color:#abc9ff">()</span></div>
<div class="c ln" style="left:1249px;top:470.92px;width:28.2px">19</div>
<div class="c" style="left:1307px;top:470.92px"><span class="sp">····</span><span style="color:#cdcfd2">aes</span><span style="color:#abc9ff">.</span><span style="color:#67dbf8">start</span><span style="color:#abc9ff">(</span><span style="color:#8fffdb">AESContext</span><span style="color:#abc9ff">.</span><span style="color:#bce0ff">MODE_ECB_ENCRYPT</span><span style="color:#abc9ff">,</span><span class="sp">·</span><span style="color:#cdcfd2">key</span><span style="color:#abc9ff">.</span><span style="color:#67dbf8">to_utf8_buffer</span><span style="color:#abc9ff">())</span></div>
<div class="c ln" style="left:1249px;top:493.92px;width:28.2px">20</div>
<div class="c" style="left:1307px;top:493.92px"><span class="sp">····</span><span style="color:#ff7085">var</span><span class="sp">·</span><span style="color:#cdcfd2">encrypted</span><span class="sp">·</span><span style="color:#abc9ff">=</span><span class="sp">·</span><span style="color:#cdcfd2">aes</span><span style="color:#abc9ff">.</span><span style="color:#67dbf8">update</span><span style="color:#abc9ff">(</span><span style="color:#cdcfd2">data</span><span style="color:#abc9ff">.</span><span style="color:#67dbf8">to_utf8_buffer</span><span style="color:#abc9ff">())</span></div>
<div class="c ln" style="left:1249px;top:516.92px;width:28.2px">21</div>
<div class="c" style="left:1307px;top:516.92px"><span class="sp">····</span><span style="color:#cdcfd2">aes</span><span style="color:#abc9ff">.</span><span style="color:#67dbf8">finish</span><span style="color:#abc9ff">()</span></div>
<div class="c ln" style="left:1249px;top:539.92px;width:28.2px">22</div>
<div class="c ln" style="left:1249px;top:562.92px;width:28.2px">23</div>
<svg class="b" style="left:1291.00px;top:571.05px" width="9.6" height="6.7" viewBox="-2 -2 9.6 6.7"><path d="M0 0 L2.8 2.7 L5.6 0" fill="none" stroke="#555a68" stroke-width="1.8"/></svg>
<div class="c" style="left:1307px;top:562.92px"><span class="sp">····</span><span style="color:#ff8ccc">if</span><span class="sp">·</span><span style="color:#cdcfd2">encrypted</span><span style="color:#abc9ff">.</span><span style="color:#67dbf8">hex_encode</span><span style="color:#abc9ff">()</span><span class="sp">·</span><span style="color:#abc9ff">==</span><span class="sp">·</span><span style="color:#ffeda1">&quot;d458af702a680ae4d089ce32fc39945d&quot;</span><span style="color:#abc9ff">:</span></div>
<div class="c ln" style="left:1249px;top:585.92px;width:28.2px">24</div>
<div class="c" style="left:1307px;top:585.92px"><span class="sp">········</span><span style="color:#cdcfd2">label2</span><span style="color:#abc9ff">.</span><span style="color:#67dbf8">show</span><span style="color:#abc9ff">()</span></div>
<div class="c ln" style="left:1249px;top:608.92px;width:28.2px">25</div>
<svg class="b" style="left:1291.00px;top:617.05px" width="9.6" height="6.7" viewBox="-2 -2 9.6 6.7"><path d="M0 0 L2.8 2.7 L5.6 0" fill="none" stroke="#555a68" stroke-width="1.8"/></svg>
<div class="c" style="left:1307px;top:608.92px"><span class="sp">····</span><span style="color:#ff8ccc">else</span><span style="color:#abc9ff">:</span></div>
<div class="c ln" style="left:1249px;top:631.92px;width:28.2px">26</div>
<div class="c" style="left:1307px;top:631.92px"><span class="sp">········</span><span style="color:#cdcfd2">label2</span><span style="color:#abc9ff">.</span><span style="color:#67dbf8">hide</span><span style="color:#abc9ff">()</span></div>
<div class="c ln" style="left:1249px;top:654.92px;width:28.2px">27</div>
<div class="c ln" style="left:1249px;top:677.92px;width:28.2px">28</div>
<svg class="b" style="left:1291.00px;top:686.05px" width="9.6" height="6.7" viewBox="-2 -2 9.6 6.7"><path d="M0 0 L2.8 2.7 L5.6 0" fill="none" stroke="#555a68" stroke-width="1.8"/></svg>
<div class="c" style="left:1307px;top:677.92px"><span style="color:#ff7085">func</span><span class="sp">·</span><span style="color:#66e6ff">back</span><span style="color:#abc9ff">()</span><span class="sp">·</span><span class="ar"><svg width="18.75" height="23" viewBox="0 0 18.75 23"><path d="M1.6 10.98 H17.6 M12.6 6.28 L17.8 10.98 L12.6 15.68" fill="none" stroke="#abc9ff" stroke-width="1.55"/></svg></span><span class="sp">·</span><span style="color:#ff7085">void</span><span class="sp">·</span><span style="color:#abc9ff">:</span></div>
<div class="c ln" style="left:1249px;top:700.92px;width:28.2px">29</div>
<div class="c" style="left:1307px;top:700.92px"><span class="sp">····</span><span style="color:#67dbf8">get_tree</span><span style="color:#abc9ff">().</span><span style="color:#67dbf8">change_scene_to_file</span><span style="color:#abc9ff">(</span><span style="color:#ffeda1">&quot;res://scenes/menu.tscn&quot;</span><span style="color:#abc9ff">)</span></div>
<div class="c ln" style="left:1249px;top:723.92px;width:28.2px">30</div>
<div class="b" style="left:1249px;top:1155px;width:1202px;height:99.59999999999991px;background:#262b3a;box-shadow:0 0 0 1px #191e2c inset"></div>
<div id="t64" class="t " style="left:1253.8px;top:1156px;color:#d6d9e0;font-weight:bold;letter-spacing:-0.400px;">Path:</div>
<div id="t65" class="t " style="left:1299.4px;top:1156px;color:#d6d9e0;letter-spacing:0.233px;">res://scripts/flag.gdc</div>
<div id="t66" class="t " style="left:1253.8px;top:1179px;color:#d6d9e0;font-weight:bold;letter-spacing:-0.496px;">Type:</div>
<div id="t67" class="t " style="left:1300.3px;top:1179px;color:#d6d9e0;letter-spacing:-0.234px;">GDScript</div>
<div id="t68" class="t " style="left:1253.8px;top:1202px;color:#d6d9e0;font-weight:bold;letter-spacing:-0.254px;">Format:</div>
<div id="t69" class="t " style="left:1320.4px;top:1202px;color:#d6d9e0;letter-spacing:-0.115px;">GDScriptBytecode</div>
<div class="b" style="left:2262px;top:1271px;width:189px;height:31px;background:#252a39;box-shadow:0 0 0 1.3px #6d9be0 inset"></div>
<div id="t70" class="t " style="left:2268px;top:1272px;color:#f2f3f6;letter-spacing:-0.078px;">Hide Resource Preview</div>
</div>
</body></html>
